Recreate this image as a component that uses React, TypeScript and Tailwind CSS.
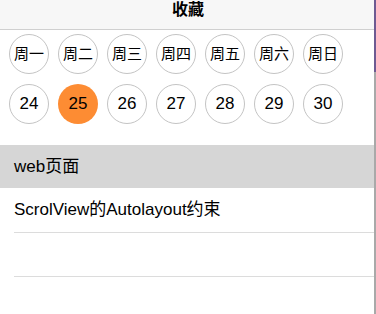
import React from "react";

const weekDays = ["周一", "周二", "周三", "周四", "周五", "周六", "周日"];
const dates = [24, 25, 26, 27, 28, 29, 30];
const selected = 25;

const font = {
  fontFamily: '"Liberation Sans", "Noto Sans CJK SC", sans-serif',
};

export default function App() {
  return (
    <div className="relative h-[314px] w-[376px] overflow-hidden bg-white text-black" style={font}>
      {/* Nav header */}
      <div className="flex h-[30px] justify-center border-b border-[#d0d0d0] bg-[#f7f7f7]">
        <span className="mt-[1px] text-[16px] font-bold leading-[18px]">收藏</span>
      </div>

      {/* Week row */}
      <div className="flex gap-[9px] pl-[9px] pt-[4px]">
        {weekDays.map((d) => (
          <div
            key={d}
            className="flex h-[40px] w-[40px] items-center justify-center rounded-full border border-[#c4c4c4] text-[15px]"
          >
            {d}
          </div>
        ))}
      </div>

      {/* Date row */}
      <div className="flex gap-[9px] pl-[9px] pt-[10px]">
        {dates.map((n) => (
          <div
            key={n}
            className={
              n === selected
                ? "flex h-[40px] w-[40px] items-center justify-center rounded-full bg-[#fd8c33] text-[17px]"
                : "flex h-[40px] w-[40px] items-center justify-center rounded-full border border-[#c4c4c4] text-[17px]"
            }
          >
            {n}
          </div>
        ))}
      </div>

      {/* Section header */}
      <div className="mt-[21px] flex h-[43px] items-center bg-[#d6d6d6] pl-[14px] text-[17px]">
        web页面
      </div>

      {/* Rows */}
      <div className="pl-[14px]">
        <div className="flex h-[45px] items-center border-b border-[#dcdcdc] text-[17px]">
          ScrolView的Autolayout约束
        </div>
        <div className="h-[44px] border-b border-[#dcdcdc]" />
      </div>

      {/* Scroll indicator strip */}
      <div className="absolute right-0 top-0 flex h-full w-[2px] flex-col">
        <div className="h-[72px] bg-[#6e5a92]" />
        <div className="flex-1 bg-[#a9a9a9]" />
      </div>
    </div>
  );
}
